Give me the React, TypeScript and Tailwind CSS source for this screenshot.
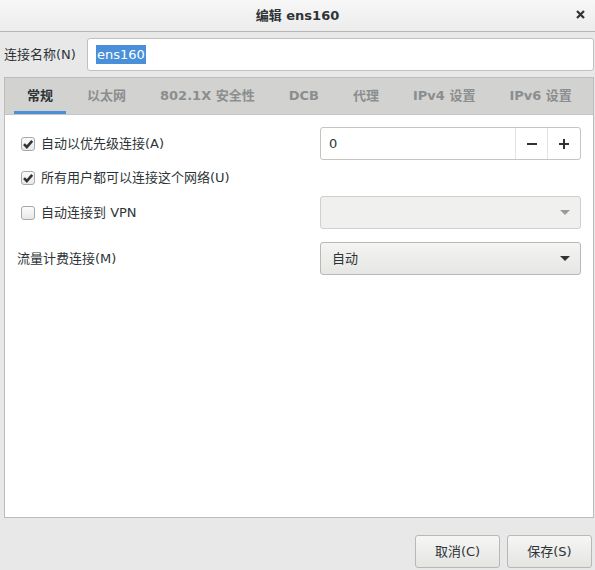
import { ReactNode } from 'react';

const FONT = { fontFamily: '"DejaVu Sans", "Noto Sans CJK SC", sans-serif' };

const TABS = ['常规', '以太网', '802.1X 安全性', 'DCB', '代理', 'IPv4 设置', 'IPv6 设置'];

function CheckBox({ checked, label }: { checked: boolean; label: string }) {
  return (
    <div className="flex items-center gap-[6px]">
      <span className="flex h-[14px] w-[14px] items-center justify-center rounded-[3px] border border-[#a8a8a8] bg-gradient-to-b from-[#fbfbfb] to-[#e8e8e8]">
        {checked && (
          <svg width="12" height="12" viewBox="0 0 12 12">
            <path d="M2 6.2 L4.8 9 L10.2 2.8" fill="none" stroke="#2e3436" strokeWidth="2.6" />
          </svg>
        )}
      </span>
      <span className="text-[13px] text-[#2e3436]">{label}</span>
    </div>
  );
}

function Arrow({ color }: { color: string }) {
  return (
    <svg width="10" height="6" viewBox="0 0 10 6">
      <path d="M0 0 L10 0 L5 5 Z" fill={color} />
    </svg>
  );
}

function Row({ className, children }: { className: string; children: ReactNode }) {
  return <div className={`flex items-center justify-between ${className}`}>{children}</div>;
}

export default function App() {
  return (
    <div className="flex h-[570px] w-[595px] flex-col bg-[#e8e8e8] text-[#2e3436]" style={FONT}>
      {/* header bar */}
      <div className="relative flex h-[32px] items-center justify-center border-b border-[#b6b6b3] bg-gradient-to-b from-[#f7f7f7] to-[#ececec]">
        <span className="text-[13px] font-bold">编辑 ens160</span>
        <svg className="absolute right-[10px] top-[10px]" width="9" height="9" viewBox="0 0 9 9">
          <path d="M1 1 L8 8 M8 1 L1 8" stroke="#2e3436" strokeWidth="2.2" />
        </svg>
      </div>

      {/* connection name */}
      <div className="mt-[6px] flex h-[33px] items-center pl-[4px] pr-[1px]">
        <span className="w-[83px] text-[13px]">连接名称(N)</span>
        <div className="flex h-full flex-1 items-center rounded-[3px] border border-[#c0c0bd] bg-white pl-[8px]">
          <span className="bg-[#4a90d9] px-[1px] text-[13px] text-white">ens160</span>
        </div>
      </div>

      {/* notebook */}
      <div className="ml-[4px] mr-[1px] mt-[6px] flex h-[441px] flex-col border border-[#bcbcb9] bg-white">
        <div className="flex h-[37px] items-stretch gap-[34px] border-b border-[#c4c4c1] bg-[#d2d2d0] pl-[22px]">
          {TABS.map((t, i) => (
            <div
              key={t}
              className={`relative flex items-center text-[13px] font-bold ${i === 0 ? 'text-[#2e3436]' : 'text-[#8b8e8f]'}`}
            >
              {t}
              {i === 0 && <span className="absolute -left-[13px] -right-[13px] bottom-0 h-[3px] bg-[#4a90d9]" />}
            </div>
          ))}
        </div>

        <div className="flex flex-col pl-[16px] pr-[12px] pt-[12px]">
          <Row className="h-[33px]">
            <CheckBox checked label="自动以优先级连接(A)" />
            <div className="flex h-full w-[261px] items-stretch rounded-[3px] border border-[#c4c4c1] bg-white">
              <span className="flex flex-1 items-center pl-[8px] text-[13px]">0</span>
              <span className="flex w-[32px] items-center justify-center border-l border-[#e4e4e2]">
                <svg width="12" height="12" viewBox="0 0 12 12">
                  <path d="M1 6 H11" stroke="#2e3436" strokeWidth="2" />
                </svg>
              </span>
              <span className="flex w-[33px] items-center justify-center border-l border-[#e4e4e2]">
                <svg width="12" height="12" viewBox="0 0 12 12">
                  <path d="M1 6 H11 M6 1 V11" stroke="#2e3436" strokeWidth="2" />
                </svg>
              </span>
            </div>
          </Row>
          <Row className="h-[36px]">
            <CheckBox checked label="所有用户都可以连接这个网络(U)" />
          </Row>
          <Row className="h-[33px]">
            <CheckBox checked={false} label="自动连接到 VPN" />
            <div className="flex h-full w-[261px] items-center justify-end rounded-[3px] border border-[#cfcfcd] bg-[#f0f0ef] pr-[10px]">
              <Arrow color="#9a9c9c" />
            </div>
          </Row>
          <Row className="mt-[13px] h-[33px]">
            <span className="-ml-[4px] pt-[1px] text-[13px]">流量计费连接(M)</span>
            <div className="flex h-full w-[261px] items-center justify-between rounded-[3px] border border-[#b8b8b5] bg-gradient-to-b from-[#f4f4f3] to-[#e6e6e5] pl-[11px] pr-[10px]">
              <span className="text-[13px]">自动</span>
              <Arrow color="#2e3436" />
            </div>
          </Row>
        </div>
      </div>

      {/* buttons */}
      <div className="mt-[17px] flex justify-end gap-[7px] pr-[3px]">
        {['取消(C)', '保存(S)'].map(b => (
          <button
            key={b}
            className="flex h-[33px] w-[85px] items-center justify-center rounded-[3px] border border-[#b8b8b5] bg-gradient-to-b from-[#f6f6f5] to-[#e4e4e3] text-[13px] text-[#2e3436]"
          >
            {b}
          </button>
        ))}
      </div>
    </div>
  );
}
